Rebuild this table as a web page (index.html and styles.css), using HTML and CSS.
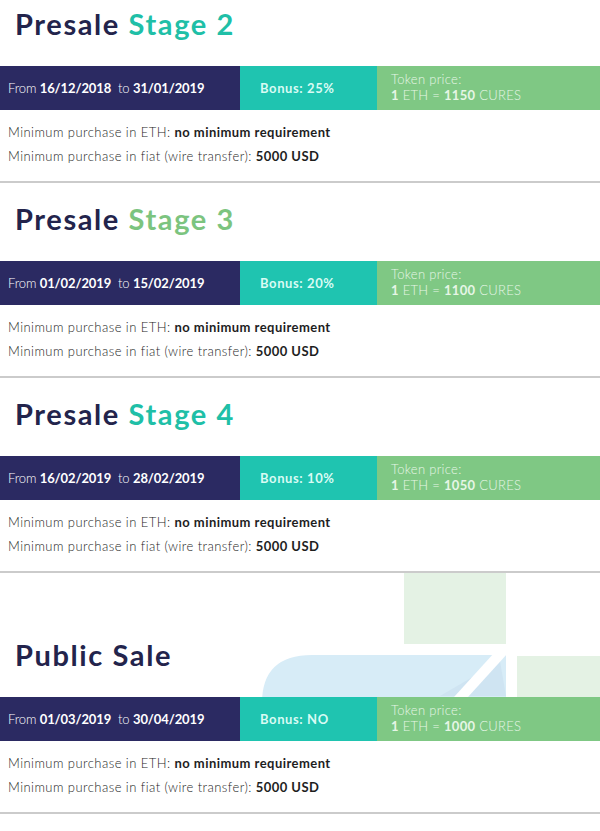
FILE: index.html
```html
<!DOCTYPE html>
<html lang="en">
<head>
<meta charset="utf-8">
<title>Token sale stages</title>
<link rel="stylesheet" href="styles.css">
</head>
<body>
<main class="stages">
  <section class="stage">
    <h2 class="stage-title">Presale <span class="accent teal">Stage 2</span></h2>
    <div class="bar">
      <div class="bar-dates"><span>From <b>16/12/2018</b>&nbsp; to <b>31/01/2019</b></span></div>
      <div class="bar-bonus"><span>Bonus: 25%</span></div>
      <div class="bar-price"><span class="price-label">Token price:</span><span class="price-value"><b>1</b> ETH = <b>1150</b> CURES</span></div>
    </div>
    <div class="info">
      <p>Minimum purchase in ETH: <b>no minimum requirement</b></p>
      <p>Minimum purchase in fiat (wire transfer): <b>5000 USD</b></p>
    </div>
  </section>

  <section class="stage">
    <h2 class="stage-title">Presale <span class="accent green">Stage 3</span></h2>
    <div class="bar">
      <div class="bar-dates"><span>From <b>01/02/2019</b>&nbsp; to <b>15/02/2019</b></span></div>
      <div class="bar-bonus"><span>Bonus: 20%</span></div>
      <div class="bar-price"><span class="price-label">Token price:</span><span class="price-value"><b>1</b> ETH = <b>1100</b> CURES</span></div>
    </div>
    <div class="info">
      <p>Minimum purchase in ETH: <b>no minimum requirement</b></p>
      <p>Minimum purchase in fiat (wire transfer): <b>5000 USD</b></p>
    </div>
  </section>

  <section class="stage">
    <h2 class="stage-title">Presale <span class="accent teal">Stage 4</span></h2>
    <div class="bar">
      <div class="bar-dates"><span>From <b>16/02/2019</b>&nbsp; to <b>28/02/2019</b></span></div>
      <div class="bar-bonus"><span>Bonus: 10%</span></div>
      <div class="bar-price"><span class="price-label">Token price:</span><span class="price-value"><b>1</b> ETH = <b>1050</b> CURES</span></div>
    </div>
    <div class="info">
      <p>Minimum purchase in ETH: <b>no minimum requirement</b></p>
      <p>Minimum purchase in fiat (wire transfer): <b>5000 USD</b></p>
    </div>
  </section>

  <section class="stage stage-public">
    <svg class="deco" width="600" height="258" viewBox="0 0 600 258" aria-hidden="true">
      <rect x="404" y="0" width="102" height="71" fill="#e4f2e4"/>
      <rect x="517" y="83" width="83" height="60" fill="#e4f2e4"/>
      <path d="M262 180 L262 130 Q262 82 312 82 L506 82 L506 258 L404 258 L404 180 Z" fill="#d7ecf7"/>
      <path d="M440 123 L500 88 L506 123 Z" fill="#cfe4f2"/>
      <path d="M494 80 L508 80 L468 124 L454 124 Z" fill="#ffffff"/>
    </svg>
    <h2 class="stage-title">Public Sale</h2>
    <div class="bar">
      <div class="bar-dates"><span>From <b>01/03/2019</b>&nbsp; to <b>30/04/2019</b></span></div>
      <div class="bar-bonus"><span>Bonus: NO</span></div>
      <div class="bar-price"><span class="price-label">Token price:</span><span class="price-value"><b>1</b> ETH = <b>1000</b> CURES</span></div>
    </div>
    <div class="info">
      <p>Minimum purchase in ETH: <b>no minimum requirement</b></p>
      <p>Minimum purchase in fiat (wire transfer): <b>5000 USD</b></p>
    </div>
  </section>
</main>
</body>
</html>
```

FILE: styles.css
```css
html, body {
  margin: 0;
  padding: 0;
  background: #ffffff;
  overflow: hidden;
}

body {
  font-family: "Lato", "Open Sans", sans-serif;
  color: #1f1f1f;
}

.stages {
  margin-top: -12px;
}

.stage {
  position: relative;
}

.stage-title {
  position: relative;
  z-index: 1;
  margin: 0;
  padding: 19px 0 0 15px;
  height: 34px;
  line-height: 34px;
  font-size: 29px;
  font-weight: 700;
  color: #23244c;
  letter-spacing: 1.6px;
}

.stage-public .stage-title {
  padding-top: 65px;
}

.accent.teal { color: #20bfa7; }
.accent.green { color: #7cc47f; }

.bar {
  position: relative;
  z-index: 1;
  margin-top: 25px;
  height: 44px;
  display: grid;
  grid-template-columns: 240px 137px 1fr;
  font-size: 13px;
  color: #ffffff;
}

.bar b { font-weight: 700; }

.bar-dates {
  background: #2b2a62;
  display: flex;
  align-items: center;
  padding-left: 8px;
  font-weight: 300;
  white-space: nowrap;
  letter-spacing: -0.1px;
}

.bar-bonus {
  background: #1fc4b0;
  display: flex;
  align-items: center;
  padding-left: 20px;
  font-weight: 700;
  color: #d9fbf4;
  letter-spacing: 0.6px;
}

.bar-price {
  background: #7fc884;
  padding: 6px 0 0 14px;
  display: flex;
  flex-direction: column;
  font-weight: 300;
  color: #e6f6e6;
  font-size: 13px;
  line-height: 15.6px;
  letter-spacing: 0.3px;
}

.bar-price b { font-weight: 700; }

.info {
  position: relative;
  z-index: 1;
  background: #ffffff;
  padding: 10px 0 13px 8px;
  border-bottom: 2px solid #cbcbcb;
  font-size: 13px;
  font-weight: 300;
  color: #1e1e1e;
  letter-spacing: 0.45px;
}

.info p {
  margin: 0;
  line-height: 24px;
}

.info b {
  font-weight: 700;
}

.deco {
  position: absolute;
  left: 0;
  top: 0;
  z-index: 0;
  overflow: visible;
}
```
